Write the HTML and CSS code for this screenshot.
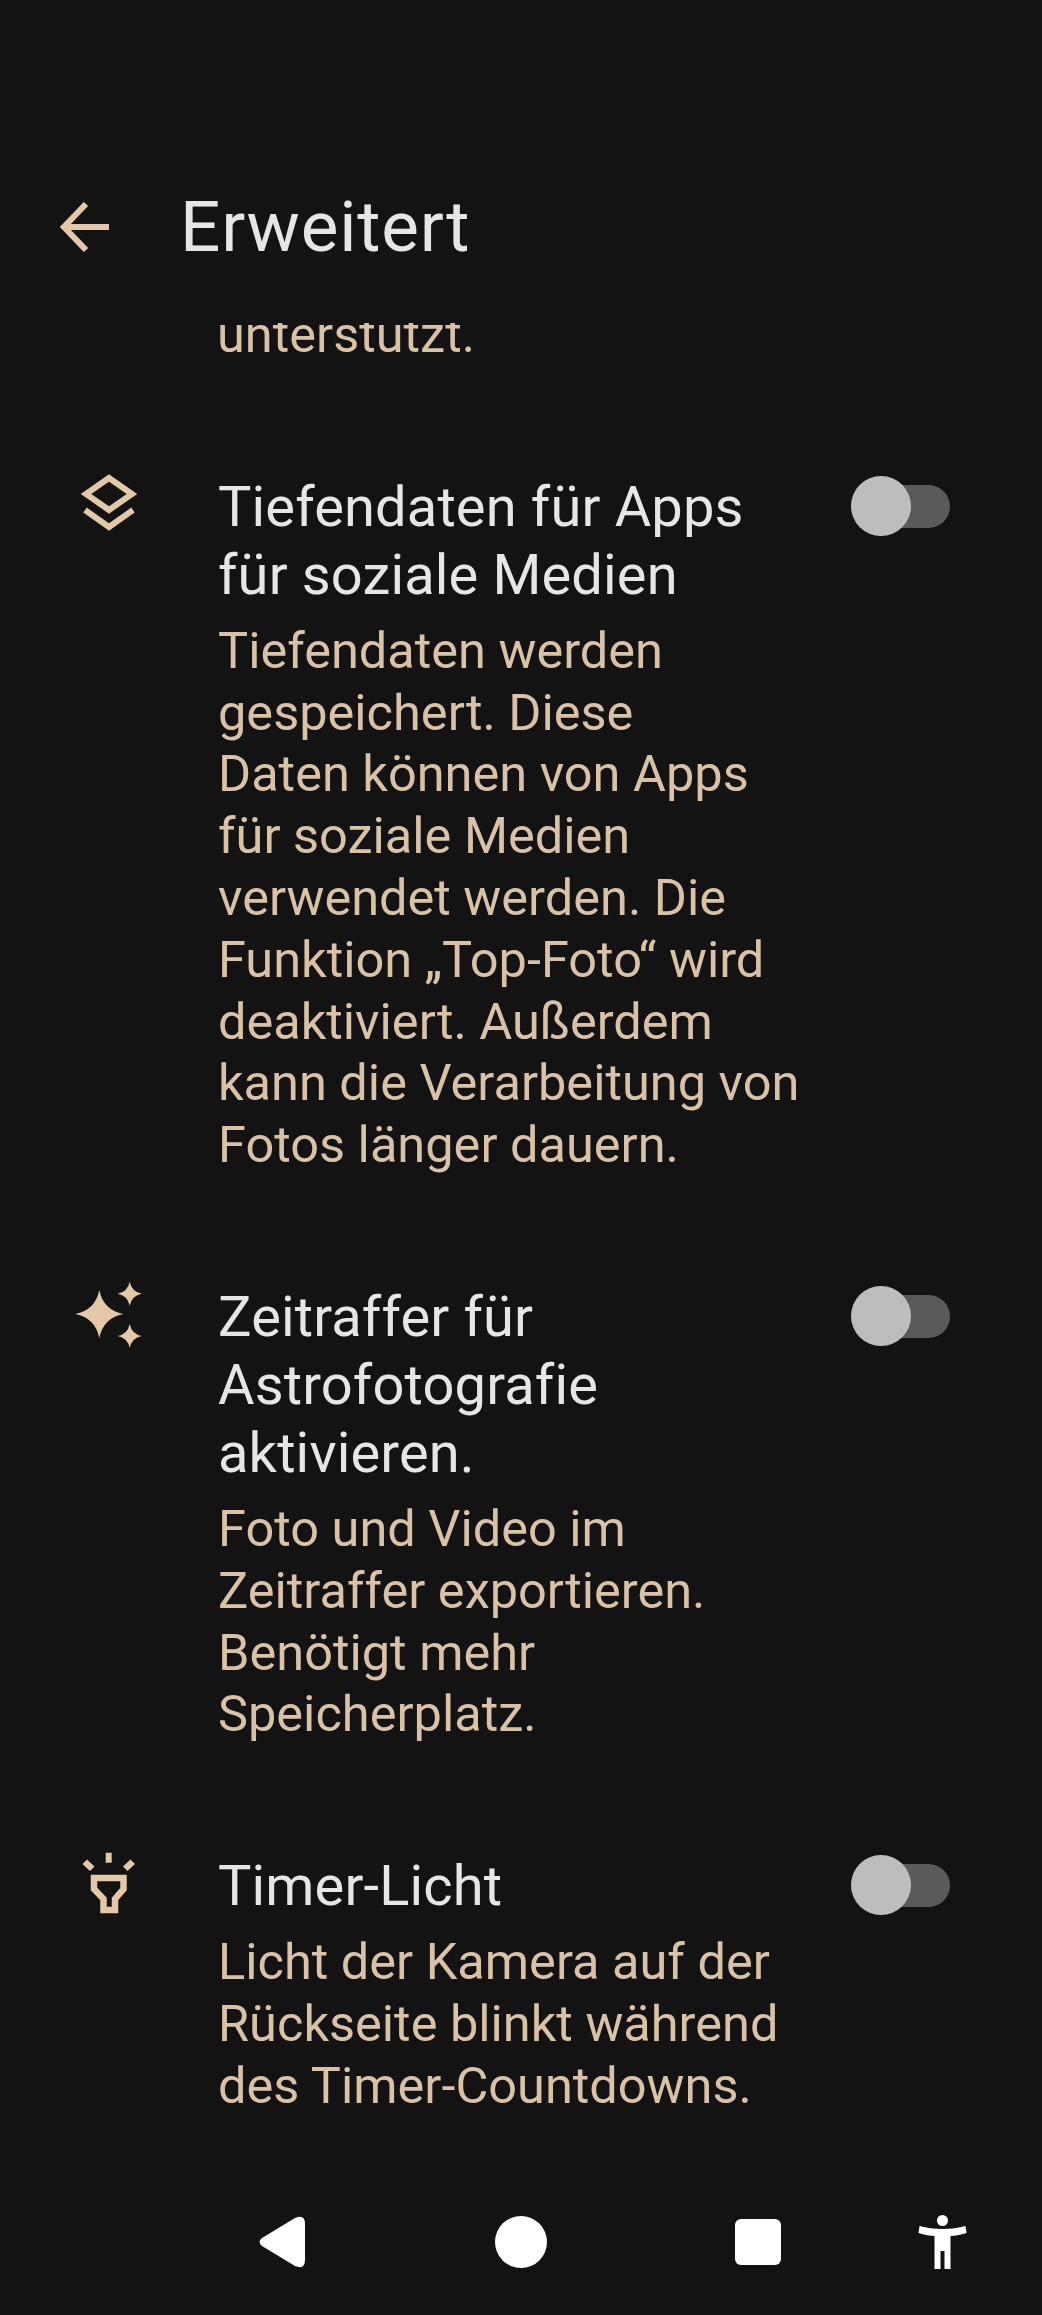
FILE: index.html
```html
<!DOCTYPE html>
<html lang="de">
<head>
<meta charset="utf-8">
<title>Erweitert</title>
<link rel="stylesheet" href="styles.css">
</head>
<body>
<div class="screen">
  <header class="appbar">
    <svg class="back" viewBox="0 0 50 50"><path d="M26 2 L4 25 L26 48 M4 25 H49"/></svg>
    <h1 class="title">Erweitert</h1>
  </header>
  <main class="list">
    <p class="desc clipped">unterstützt.</p>
    <section class="row">
      <svg class="icon" viewBox="0 0 70 70"><path class="line" d="M36 5 L59 21 L36 37 L13 21 Z M12 37 L36 54 L60 37"/></svg>
      <div class="text">
        <h2 class="name">Tiefendaten für Apps<br>für soziale Medien</h2>
        <p class="desc">Tiefendaten werden<br>gespeichert. Diese<br>Daten können von Apps<br>für soziale Medien<br>verwendet werden. Die<br>Funktion „Top-Foto“ wird<br>deaktiviert. Außerdem<br>kann die Verarbeitung von<br>Fotos länger dauern.</p>
      </div>
      <div class="toggle"><span class="thumb"></span></div>
    </section>
    <section class="row">
      <svg class="icon" viewBox="0 0 70 70"><path class="fill" d="M26.300 7 Q30.300 27 50.300 31 Q30.300 35 26.300 55 Q22.300 35 2.300 31 Q22.300 27 26.300 7 Z M56.700 -1.300 Q58.700 8.700 68.700 10.700 Q58.700 12.700 56.700 22.700 Q54.700 12.700 44.700 10.700 Q54.700 8.700 56.700 -1.300 Z M56.700 41 Q58.700 51 68.700 53 Q58.700 55 56.700 65 Q54.700 55 44.700 53 Q54.700 51 56.700 41 Z"/></svg>
      <div class="text">
        <h2 class="name">Zeitraffer für<br>Astrofotografie<br>aktivieren.</h2>
        <p class="desc">Foto und Video im<br>Zeitraffer exportieren.<br>Benötigt mehr<br>Speicherplatz.</p>
      </div>
      <div class="toggle"><span class="thumb"></span></div>
    </section>
    <section class="row">
      <svg class="icon" viewBox="0 0 70 70"><path class="line lamp" d="M21 26 H50.500 V37 L42 47 V58 H30.500 V47 L21 37 Z"/><path class="fill" d="M32.700 0.700 H38.700 V10.700 H32.700 Z M14 7.500 L21.500 14.500 L17 19 L9.500 12 Z M57.500 7.500 L62 12 L54.500 19 L50 14.500 Z"/></svg>
      <div class="text">
        <h2 class="name">Timer-Licht</h2>
        <p class="desc">Licht der Kamera auf der<br>Rückseite blinkt während<br>des Timer-Countdowns.</p>
      </div>
      <div class="toggle"><span class="thumb"></span></div>
    </section>
  </main>
  <nav class="navbar">
    <svg class="nav-back" viewBox="0 0 46 52"><path d="M3 22 L36 2 Q46 -2 46 8 V44 Q46 54 36 50 L3 30 Q-2 26 3 22 Z"/></svg>
    <span class="nav-home"></span>
    <span class="nav-recent"></span>
    <svg class="nav-a11y" viewBox="0 0 48 54"><circle cx="24" cy="5.500" r="5.500"/><path d="M1 11 C15 15 33 15 47 11 L48 18 C42 20 36 21 32 21 V54 H26 V36 H22 V54 H16 V21 C12 21 6 20 0 18 Z"/></svg>
  </nav>
</div>
</body>
</html>
```
FILE: styles.css
```css
* { box-sizing: border-box; }
html, body { margin: 0; padding: 0; background: #131313; }
.screen {
  width: 1042px;
  height: 2315px;
  display: flex;
  flex-direction: column;
  overflow: hidden;
  font-family: Roboto, "Liberation Sans", sans-serif;
  background: #131313;
}
.appbar {
  flex: none;
  height: 323px;
  padding: 187px 0 0 60px;
  display: flex;
  align-items: flex-start;
  gap: 70px;
}
.back { flex: none; width: 50px; height: 50px; margin-top: 15px; fill: none; stroke: #e3c9a8; stroke-width: 6; }
.title { margin: 0; font-size: 71px; line-height: 80px; font-weight: 400; letter-spacing: 0.8px; color: #e6e6e6; }
.list { flex: 1; min-height: 0; overflow: hidden; padding: 0 92px 0 217px; }
.row { display: flex; align-items: flex-start; margin-top: 107px; }
.icon { flex: none; width: 70px; height: 70px; margin-left: -144px; margin-right: 75px; overflow: visible; }
.line { fill: none; stroke: #e3c9a8; stroke-width: 6; }
.lamp { stroke-width: 6.500; }
.fill { fill: #e3c9a8; }
.text { flex: 1; min-width: 0; }
.name { margin: 0 0 11px; font-size: 56px; line-height: 68px; font-weight: 400; letter-spacing: 0.15px; color: #e6e6e6; white-space: nowrap; }
.desc { margin: 0; font-size: 50.500px; line-height: 61.800px; color: #d9c2a6; white-space: nowrap; }
.desc.clipped { margin-top: -19px; }
.toggle { flex: none; width: 99px; height: 43px; margin-top: 12px; border-radius: 22px; background: #5a5a5a; position: relative; }
.thumb { position: absolute; left: 0; top: -9px; width: 60px; height: 60px; border-radius: 50%; background: #bdbdbd; }
.navbar { flex: none; height: 130px; display: flex; align-items: center; padding: 0 0 16px 259px; }
.nav-back { width: 46px; height: 52px; fill: #fff; }
.nav-home { width: 52px; height: 52px; margin-left: 190px; border-radius: 50%; background: #fff; }
.nav-recent { width: 46px; height: 46px; margin-left: 188px; border-radius: 6px; background: #fff; }
.nav-a11y { width: 49px; height: 54px; margin-left: 137px; fill: #fff; }
```
